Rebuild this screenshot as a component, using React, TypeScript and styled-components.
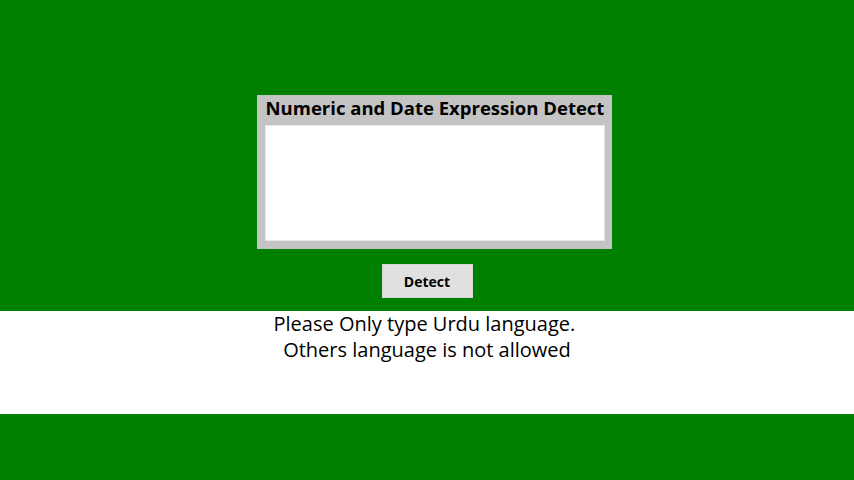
import React, { useState } from "react";
import styled, { createGlobalStyle } from "styled-components";

const GlobalStyle = createGlobalStyle`
  html, body {
    margin: 0;
    padding: 0;
    background-color: #008000;
    font-family: "Open Sans", "DejaVu Sans", sans-serif;
  }
`;

const Page = styled.div`
  display: flex;
  flex-direction: column;
  align-items: center;
`;

const Top = styled.div`
  width: 100%;
  display: flex;
  flex-direction: column;
  align-items: center;
  padding-top: 95px;
  padding-bottom: 13px;
`;

const Card = styled.div`
  width: 355px;
  box-sizing: border-box;
  margin-left: 15px;
  padding: 0 7px 8px 8px;
  background-color: #c4c4c4;
  display: flex;
  flex-direction: column;
  align-items: center;
`;

const Title = styled.h3`
  margin: 0;
  height: 30px;
  line-height: 26px;
  font-size: 18.5px;
  font-weight: 700;
  color: #000;
  white-space: nowrap;
`;

const TextBox = styled.textarea`
  width: 340px;
  height: 116px;
  box-sizing: border-box;
  border: 1px solid #e6e6e6;
  background: #fff;
  resize: none;
  outline: none;
  font-family: "Open Sans", sans-serif;
  font-size: 16px;
`;

const DetectButton = styled.button`
  margin-top: 15px;
  width: 91px;
  height: 34px;
  background-color: #e0e0e0;
  border: 1px solid #d6d6d6;
  font-family: "Open Sans", sans-serif;
  font-size: 14px;
  font-weight: 700;
  color: #000;
  cursor: pointer;
`;

const Notice = styled.div`
  width: 100%;
  height: 103px;
  background-color: #fff;
  text-align: center;
  font-size: 20px;
  line-height: 26px;
  color: #000;
`;

const App: React.FC = () => {
  const [text, setText] = useState("");

  return (
    <Page>
      <GlobalStyle />
      <Top>
        <Card>
          <Title>Numeric and Date Expression Detect</Title>
          <TextBox value={text} onChange={(e) => setText(e.target.value)} />
        </Card>
        <DetectButton>Detect</DetectButton>
      </Top>
      <Notice>
        {"Please Only type Urdu language.\u00a0"}
        <br /> Others language is not allowed
      </Notice>
    </Page>
  );
};

export default App;
